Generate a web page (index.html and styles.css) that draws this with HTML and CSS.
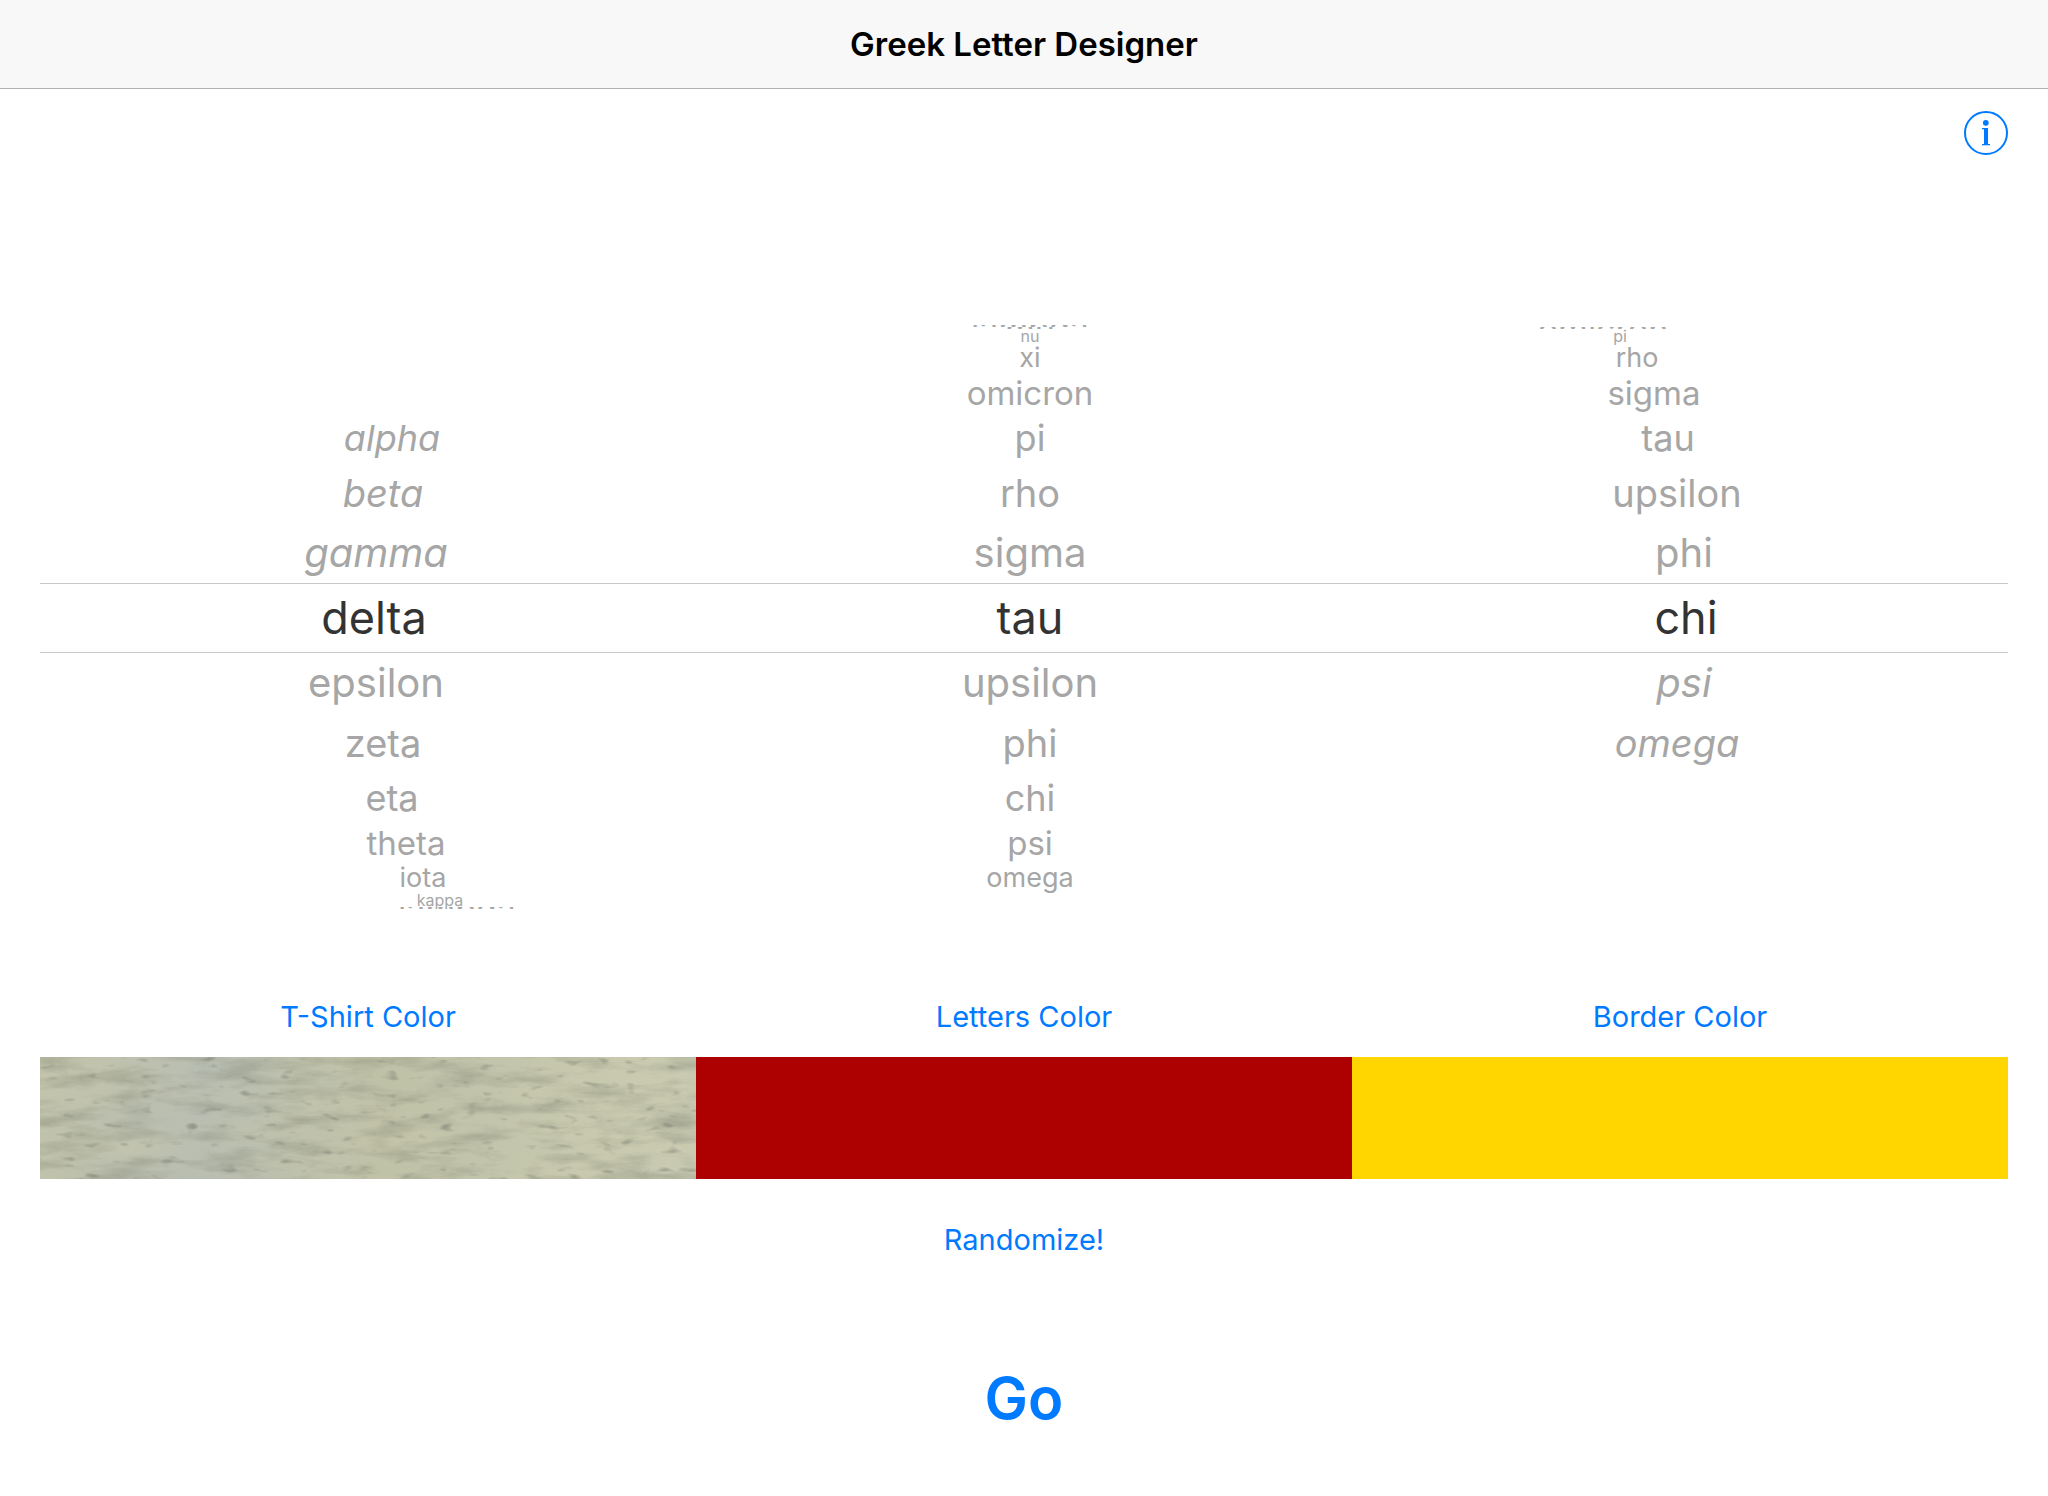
FILE: index.html
```
<!DOCTYPE html>
<html lang="en">
<head>
    <meta charset="UTF-8">
    <meta name="viewport" content="width=device-width, initial-scale=1.0">
    <title>Greek Letter Designer</title>
    <link rel="stylesheet" href="styles.css">
</head>
<body>
    <header class="navbar">
        <h1>Greek Letter Designer</h1>
    </header>

    <main class="designer">
        <div class="toolbar">
            <button type="button" class="info-btn" aria-label="Info">
                <svg viewBox="0 0 44 44" width="44" height="44">
                    <circle cx="22" cy="22" r="21" fill="none" stroke="currentColor" stroke-width="2"/>
                    <circle cx="21.8" cy="11.8" r="2.9" fill="currentColor"/>
                    <path d="M18 17h6v16h2v1.2h-8V33h2V18.2h-2z" fill="currentColor"/>
                </svg>
            </button>
        </div>

        <!-- l0 is the selected row, higher numbers are further round the wheel -->
        <form class="picker">
            <div class="wheel wheel-left" role="radiogroup" aria-label="First letter">
                <label class="l3 lean"><input type="radio" name="first">alpha</label>
                <label class="l2 lean"><input type="radio" name="first">beta</label>
                <label class="l1 lean"><input type="radio" name="first">gamma</label>
                <label class="l0"><input type="radio" name="first" checked>delta</label>
                <label class="l1"><input type="radio" name="first">epsilon</label>
                <label class="l2"><input type="radio" name="first">zeta</label>
                <label class="l3"><input type="radio" name="first">eta</label>
                <label class="l4"><input type="radio" name="first">theta</label>
                <label class="l5"><input type="radio" name="first">iota</label>
                <label class="l6"><input type="radio" name="first">kappa</label>
                <label class="l7"><input type="radio" name="first">lambda</label>
            </div>
            <div class="wheel wheel-middle" role="radiogroup" aria-label="Second letter">
                <label class="l7"><input type="radio" name="second">lambda</label>
                <label class="l7"><input type="radio" name="second">mu</label>
                <label class="l6"><input type="radio" name="second">nu</label>
                <label class="l5"><input type="radio" name="second">xi</label>
                <label class="l4"><input type="radio" name="second">omicron</label>
                <label class="l3"><input type="radio" name="second">pi</label>
                <label class="l2"><input type="radio" name="second">rho</label>
                <label class="l1"><input type="radio" name="second">sigma</label>
                <label class="l0"><input type="radio" name="second" checked>tau</label>
                <label class="l1"><input type="radio" name="second">upsilon</label>
                <label class="l2"><input type="radio" name="second">phi</label>
                <label class="l3"><input type="radio" name="second">chi</label>
                <label class="l4"><input type="radio" name="second">psi</label>
                <label class="l5"><input type="radio" name="second">omega</label>
            </div>
            <div class="wheel wheel-right" role="radiogroup" aria-label="Third letter">
                <label class="l7"><input type="radio" name="third">omicron</label>
                <label class="l6"><input type="radio" name="third">pi</label>
                <label class="l5"><input type="radio" name="third">rho</label>
                <label class="l4"><input type="radio" name="third">sigma</label>
                <label class="l3"><input type="radio" name="third">tau</label>
                <label class="l2"><input type="radio" name="third">upsilon</label>
                <label class="l1"><input type="radio" name="third">phi</label>
                <label class="l0"><input type="radio" name="third" checked>chi</label>
                <label class="l1 lean"><input type="radio" name="third">psi</label>
                <label class="l2 lean"><input type="radio" name="third">omega</label>
            </div>
        </form>

        <div class="colors">
            <div class="color">
                <button type="button">T-Shirt Color</button>
                <svg class="swatch" aria-hidden="true">
                    <linearGradient id="cloth">
                        <stop offset="0" stop-color="#bfc1ab"/>
                        <stop offset="0.25" stop-color="#b7bcb2"/>
                        <stop offset="0.5" stop-color="#bfc1a7"/>
                        <stop offset="1" stop-color="#c8cab2"/>
                    </linearGradient>
                    <filter id="clouds" x="0" y="0" width="100%" height="100%" color-interpolation-filters="sRGB">
                        <feTurbulence type="fractalNoise" baseFrequency="0.006 0.02" numOctaves="3" seed="4"/>
                        <feColorMatrix values="0 0 0 0 0.8  0 0 0 0 0.8  0 0 0 0 0.68  1.6 0 0 0 -0.5"/>
                    </filter>
                    <filter id="threads" x="0" y="0" width="100%" height="100%" color-interpolation-filters="sRGB">
                        <feTurbulence type="fractalNoise" baseFrequency="0.018 0.07" numOctaves="5" seed="11"/>
                        <feColorMatrix values="0 0 0 0 0.5  0 0 0 0 0.51  0 0 0 0 0.44  1.8 0 0 0 -0.76"/>
                    </filter>
                    <filter id="specks" x="0" y="0" width="100%" height="100%" color-interpolation-filters="sRGB">
                        <feTurbulence type="fractalNoise" baseFrequency="0.05 0.12" numOctaves="2" seed="23"/>
                        <feColorMatrix values="0 0 0 0 0.4  0 0 0 0 0.42  0 0 0 0 0.38  3 0 0 0 -1.95"/>
                    </filter>
                    <rect width="100%" height="100%" fill="url(#cloth)"/>
                    <rect width="100%" height="100%" filter="url(#clouds)" opacity="0.5"/>
                    <rect width="100%" height="100%" filter="url(#threads)" opacity="0.5"/>
                    <rect width="100%" height="100%" filter="url(#specks)" opacity="0.6"/>
                </svg>
            </div>
            <div class="color">
                <button type="button">Letters Color</button>
                <div class="swatch swatch-red"></div>
            </div>
            <div class="color">
                <button type="button">Border Color</button>
                <div class="swatch swatch-gold"></div>
            </div>
        </div>

        <div class="actions">
            <button type="button">Randomize!</button>
            <button type="button" class="go-btn">Go</button>
        </div>
    </main>
</body>
</html>
```
FILE: styles.css
```
* {
    box-sizing: border-box;
}

body {
    margin: 0;
    background-color: #fff;
    font-family: Inter, "Liberation Sans", sans-serif;
}

.navbar {
    padding: 24px;
    background-color: #f8f8f8;
    border-bottom: 1px solid #b2b2b2;
    text-align: center;
}

.navbar h1 {
    margin: 0;
    font-size: 33px;
    line-height: 40px;
    font-weight: 600;
    color: #000;
}

.designer {
    padding: 22px 40px;
}

button {
    padding: 0;
    border: none;
    background: none;
    color: #007aff;
    font-family: inherit;
    font-size: 29px;
    line-height: 40px;
    cursor: pointer;
}

.toolbar {
    display: flex;
    justify-content: flex-end;
}

.info-btn {
    line-height: 0;
}

/* picker */
.picker {
    display: grid;
    grid-template-columns: repeat(3, 1fr);
    column-gap: 12px;
    margin-top: 170px;
    padding-left: 12px;
    /* the two lines around the selected row */
    background: linear-gradient(#c8c8c8, #c8c8c8) 0 258px / 100% 1px no-repeat,
                linear-gradient(#c8c8c8, #c8c8c8) 0 327px / 100% 1px no-repeat;
}

.wheel {
    display: flex;
    flex-direction: column;
    text-align: center;
    color: #a6a6a6;
}

.wheel label {
    cursor: pointer;
}

.wheel input {
    appearance: none;
    position: absolute;
    margin: 0;
}

/* no rows above alpha */
.wheel-left {
    padding-top: 88px;
}

.wheel-right {
    padding-top: 2px;
}

.lean {
    font-style: italic;
}

.l0 {
    --shift: 0px;
    font-size: 45px;
    line-height: 70px;
    color: #333;
}

.l1 {
    --shift: 4px;
    font-size: 40px;
    line-height: 60px;
}

.l2 {
    --shift: 18px;
    font-size: 38px;
    line-height: 60px;
}

.l3 {
    --shift: 36px;
    font-size: 36px;
    line-height: 50px;
}

.l4 {
    --shift: 64px;
    font-size: 33px;
    line-height: 40px;
}

.l5 {
    --shift: 98px;
    font-size: 27px;
    line-height: 30px;
}

.l6 {
    --shift: 132px;
    font-size: 16px;
    line-height: 14px;
}

/* rows seen nearly edge-on */
.l7 {
    --shift: 166px;
    height: 2px;
    font-size: 34px;
    line-height: 6px;
    overflow: hidden;
}

/* the outer wheels turn towards the middle */
.wheel-left label {
    padding-left: var(--shift);
}

.wheel-right label {
    padding-right: var(--shift);
}

/* colors */
.colors {
    display: grid;
    grid-template-columns: repeat(3, 1fr);
    margin-top: 88px;
}

.color {
    display: flex;
    flex-direction: column;
    align-items: center;
    gap: 20px;
}

.swatch {
    display: block;
    width: 100%;
    height: 122px;
}

.swatch-red {
    background-color: #ad0000;
}

.swatch-gold {
    background-color: #ffd600;
}

.actions {
    display: flex;
    flex-direction: column;
    align-items: center;
    gap: 103px;
    margin-top: 41px;
}

.go-btn {
    font-size: 58px;
    line-height: 70px;
    font-weight: 600;
}
```
